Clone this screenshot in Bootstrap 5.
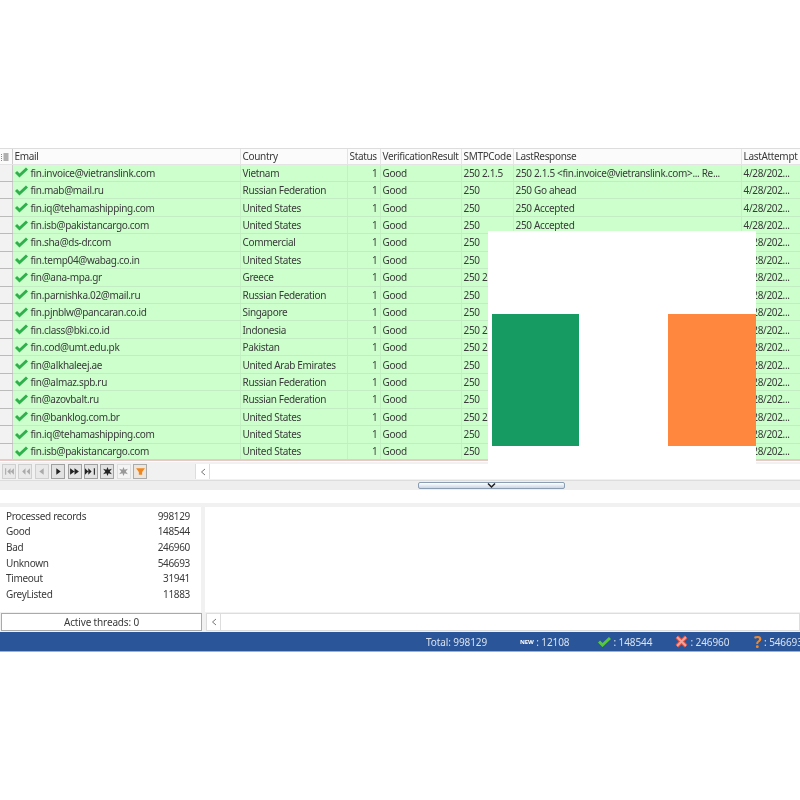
<!DOCTYPE html>
<html lang="en"><head><meta charset="utf-8"><title>Email verifier</title>
<link href="https://cdn.jsdelivr.net/npm/bootstrap@5.3.0/dist/css/bootstrap.min.css" rel="stylesheet">
<style>
html,body{margin:0;background:#fff;height:800px;overflow:hidden}
body{font-family:"Noto Sans","Liberation Sans",sans-serif;font-size:10px;letter-spacing:-.33px;color:#3a3a3a;line-height:1}
.appwin{margin-top:148px;height:504px;background:#f1f1f1;position:relative;overflow:hidden;display:flex;flex-direction:column;filter:blur(.4px)}
.grid-wrap{height:314px;flex:none;overflow:hidden;background:#fff;border-top:1px solid #ddd}
.vgrid{table-layout:fixed;width:822px;margin:0;border-collapse:collapse;--bs-table-bg:transparent}
.vgrid th,.vgrid td{padding:0 2px;height:17.44px;font-weight:400;white-space:nowrap;overflow:hidden;vertical-align:middle;border:0;color:#3a3a3a;box-shadow:none}
.vgrid th{height:15px;background:#fbfbfb;border-right:1px solid #e4e4e4;border-bottom:1px solid #e4e4e4}
.vgrid td{background:#ccffcc;border-right:1px solid #c4f0c4;border-bottom:1px solid #c4ecc4}
.vgrid td.gutter,.vgrid th.gutter{background:#f2f2f2;padding:0;border-right:1px solid #ccc;border-bottom:1px solid #bbb}
.vgrid th.gutter{background:#fbfbfb;border-bottom-color:#e4e4e4}
.vgrid tr:last-child td{border-bottom:2px solid #eac8c8}
.cell-mail{display:flex;align-items:center;gap:3px}
.num{text-align:right}
.flag-mask{position:absolute;left:488px;top:83px;width:268px;height:234px;background:#fff}
.flag-g{position:absolute;left:4px;top:83px;width:87px;height:132px;background:#169b62}
.flag-o{position:absolute;left:180px;top:83px;width:88px;height:132px;background:#ff883e}
.navbar-row{height:17px;margin-top:1px;display:flex;align-items:center;flex:none}
.nav-tools{display:flex;gap:2.400px;padding-left:2px;width:195px}
.tool{width:14px;height:15px;background:#e9e9e9;border:1px solid #cfcfcf;display:flex;align-items:center;justify-content:center}
.tool.on{background:#e2e2e2;border-color:#a0a0a0}
.tool.pale{background:#f4f4f4;border-color:#ddd}
.tool.orange{background:#ece6de;border-color:#aaa}
.hscroll{flex:1;height:15px;background:#fff;display:flex;border-left:1px solid #ddd}
.arrow-box{width:14px;border-right:1px solid #ddd;display:flex;align-items:center;justify-content:center}
.split{height:10px;position:relative;border-top:1px solid #ddd;background:#eee;flex:none}
.split-handle{position:absolute;left:418px;top:1px;width:147px;height:7px;border:1px solid #8a9db2;border-radius:2px;background:linear-gradient(#fff,#c9d6e4);display:flex;justify-content:center;align-items:center}
.gap-strip{height:13px;background:#fff;flex:none}
.stats-row{display:flex;gap:4px;flex:none;height:105px;margin-top:4px}
.stats{width:201px;background:#fff;padding:1px 11px 0 6px}
.stat-line{display:flex;justify-content:space-between;height:15.6px;align-items:center}
.logpane{flex:1;background:#fff}
.bot-row{display:flex;gap:4px;height:18px;margin-top:1px;flex:none}
.threads{width:201px;margin-left:1px;background:#fff;border:1px solid #aaa;text-align:center;line-height:16px;letter-spacing:-.15px}
.bot-scroll{flex:1;background:#fff;border:1px solid #ddd;display:flex}
.status-bar{flex:none;height:20px;margin-top:1px;background:#2a5599;color:#d8e2f0;position:relative;white-space:nowrap;border-bottom:1px solid #9fb0c8;letter-spacing:-.1px}
.st{display:flex;align-items:center;position:absolute;top:0;height:19px}
.newtag{font-size:6px;font-weight:700;color:#fff}
.qmark{color:#ef8a2c;font-weight:700;font-size:16px}
</style></head><body>
<div class="appwin">
 <div class="grid-wrap">
 <table class="table vgrid"><colgroup><col style="width:12px"><col style="width:228px"><col style="width:107px"><col style="width:33px"><col style="width:81px"><col style="width:52px"><col style="width:228px"><col style="width:81px"></colgroup>
 <thead><tr><th class="gutter"><svg width="9" height="9" viewBox="0 0 9 9"><path d="M3.500 1h5M3.500 3h5M3.500 5h5M3.500 7h5" stroke="#666"/><path d="M1.500 1v7" stroke="#888" stroke-dasharray="1 1"/></svg></th><th>Email</th><th>Country</th><th>Status</th><th>VerificationResult</th><th>SMTPCode</th><th>LastResponse</th><th>LastAttempt</th></tr></thead>
 <tbody id="rows"></tbody></table>
 </div>
 <div class="flag-mask"><div class="flag-g"></div><div class="flag-o"></div></div>
 <div class="navbar-row">
  <div class="nav-tools" id="tools"></div>
  <div class="hscroll"><div class="arrow-box"><svg width="6" height="8" viewBox="0 0 6 8"><path d="M5 1 1.500 4 5 7" fill="none" stroke="#777"/></svg></div></div>
 </div>
 <div class="split"><div class="split-handle"><svg width="9" height="5" viewBox="0 0 9 5"><path d="M1 .5 4.500 4 8 .5" fill="none" stroke="#222" stroke-width="1.500"/></svg></div></div>
 <div class="gap-strip"></div>
 <div class="stats-row">
  <div class="stats" id="stats"></div><div class="logpane"></div>
 </div>
 <div class="bot-row"><div class="threads">Active threads: 0</div><div class="bot-scroll"><div class="arrow-box"><svg width="6" height="8" viewBox="0 0 6 8"><path d="M5 1 1.500 4 5 7" fill="none" stroke="#777"/></svg></div></div></div>
 <div class="status-bar">
  <span class="st" style="left:426px">Total: 998129</span>
  <span class="st" style="left:520px"><span class="newtag">NEW</span>&nbsp;: 12108</span>
  <span class="st" style="left:598px"><svg width="13" height="11" viewBox="0 0 13 11"><path d="M1 5.500 4.500 9 12 2" fill="none" stroke="#55c83c" stroke-width="3"/></svg>&nbsp;: 148544</span>
  <span class="st" style="left:675px"><svg width="13" height="13" viewBox="0 0 13 13"><path d="M2 2 11 11M11 2 2 11" stroke="#d8564e" stroke-width="4"/><path d="M2 2 11 11M11 2 2 11" stroke="#f4a29c" stroke-width="1.800"/></svg>&nbsp;: 246960</span>
  <span class="st" style="left:754px"><span class="qmark">?</span>&nbsp;: 546693</span>
 </div>
</div>
<script>
const R=[["fin.invoice@vietranslink.com","Vietnam","250 2.1.5","250 2.1.5 <fin.invoice@vietranslink.com>... Re..."],["fin.mab@mail.ru","Russian Federation","250","250 Go ahead"],["fin.iq@tehamashipping.com","United States","250","250 Accepted"],["fin.isb@pakistancargo.com","United States","250","250 Accepted"],["fin.sha@ds-dr.com","Commercial","250",""],["fin.temp04@wabag.co.in","United States","250",""],["fin@ana-mpa.gr","Greece","250 2.1.5",""],["fin.parnishka.02@mail.ru","Russian Federation","250",""],["fin.pjnblw@pancaran.co.id","Singapore","250",""],["fin.class@bki.co.id","Indonesia","250 2.1.5",""],["fin.cod@umt.edu.pk","Pakistan","250 2.1.5",""],["fin@alkhaleej.ae","United Arab Emirates","250",""],["fin@almaz.spb.ru","Russian Federation","250",""],["fin@azovbalt.ru","Russian Federation","250",""],["fin@banklog.com.br","United States","250 2.1.5",""],["fin.iq@tehamashipping.com","United States","250",""],["fin.isb@pakistancargo.com","United States","250",""]];
const chk='<svg width="13" height="11" viewBox="0 0 13 11"><path d="M1 5 4.500 8.500 12 1.500" fill="none" stroke="#30b04c" stroke-width="3"/></svg>';
const esc=s=>s.replace(/</g,"&lt;");
document.getElementById("rows").innerHTML=R.map(r=>`<tr><td class="gutter"></td><td><div class="cell-mail">${chk}<span>${r[0]}</span></div></td><td>${r[1]}</td><td class="num">1</td><td>Good</td><td>${r[2]}</td><td>${esc(r[3])}</td><td>4/28/202...</td></tr>`).join("");
document.getElementById("stats").innerHTML=[["Processed records",998129],["Good",148544],["Bad",246960],["Unknown",546693],["Timeout",31941],["GreyListed",11883]].map(a=>`<div class="stat-line"><span>${a[0]}</span><span>${a[1]}</span></div>`).join("");
const g=(d,c)=>`<svg width="11" height="9" viewBox="0 0 10 8"><path d="${d}" fill="${c}"/></svg>`;
const star="M5 0l1 2.500 3-1-2 2.500 2 2.500-3-1-1 2.500-1-2.500-3 1 2-2.500-2-2.500 3 1z";
const T=[["M1 1h1v6H1zM6 1v6L3 4zM9 1v6L6 4z","#aaa",""],["M5 1v6L2 4zM9 1v6L6 4z","#aaa",""],["M7 1v6L3 4z","#aaa",""],["M3 1v6l4-3z","#222","on"],["M1 1v6l4-3zM5 1v6l4-3z","#222","on"],["M0 1v6l3-3zM3 1v6l3-3zM8 1h1v6H8z","#222","on"],[star,"#222","on"],[star,"#999","pale"],["M1 1h8L6.500 4.500V7h-3V4.500z","#f0861e","orange"]];
document.getElementById("tools").innerHTML=T.map(t=>`<div class="tool ${t[2]}">${g(t[0],t[1])}</div>`).join("");
</script>
</body></html>
